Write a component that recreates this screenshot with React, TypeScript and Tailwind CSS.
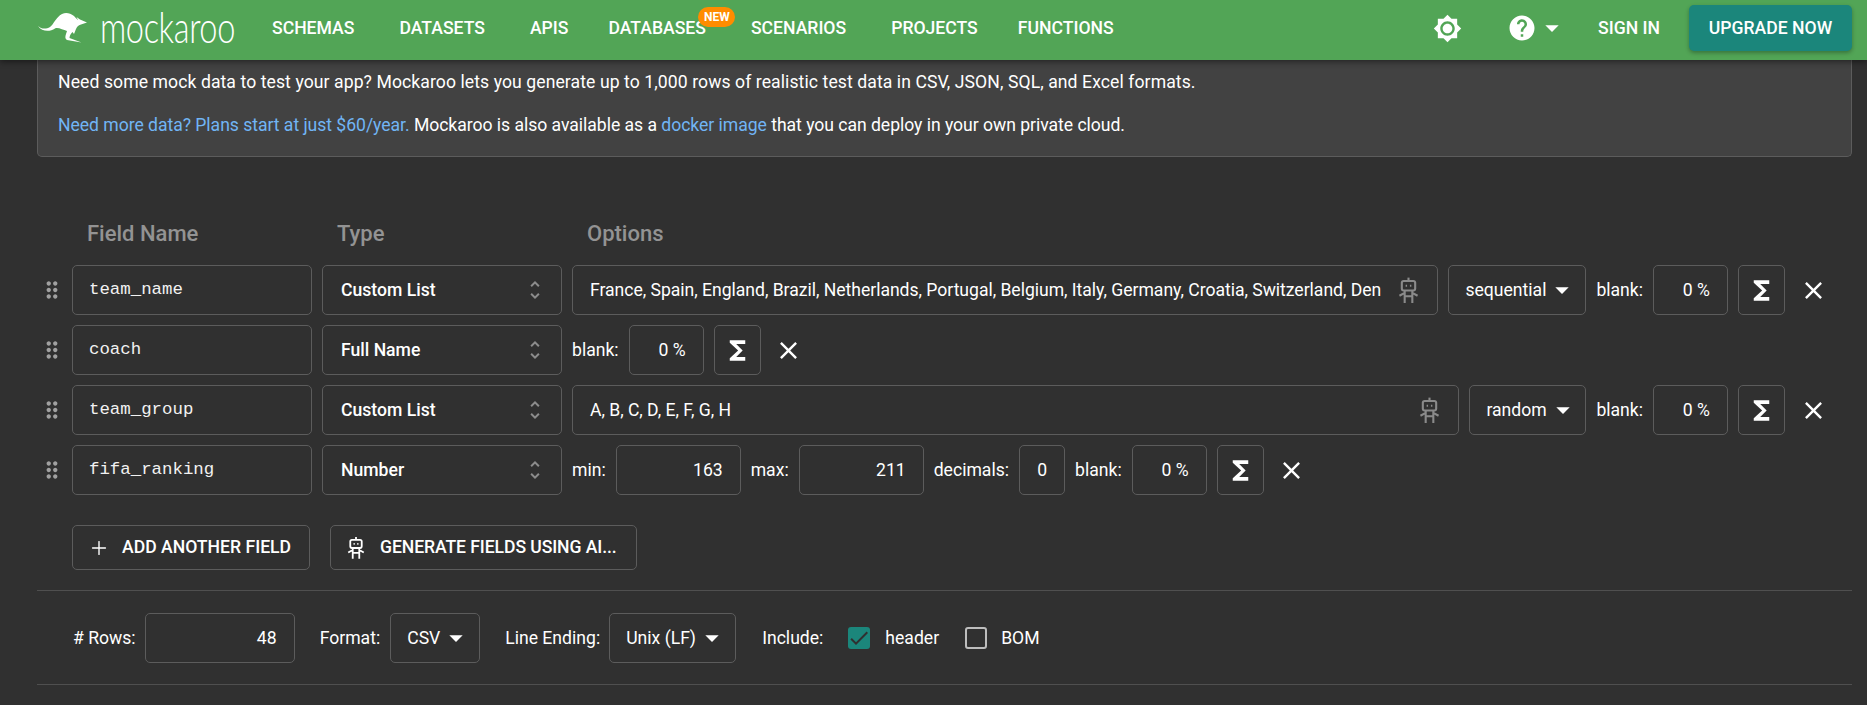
import React from "react";
import { MdArrowDropDown, MdBrightness7, MdCheck, MdClose, MdDragIndicator, MdFunctions, MdHelp, MdUnfoldMore } from "react-icons/md";
import { Plus } from "lucide-react";

const box = "h-[50px] border border-[#5c5c5c] rounded-[5px] flex items-center shrink-0";

function Robot({ className }: { className: string }) {
  return (
    <svg viewBox="0 0 22 28" fill="none" stroke="currentColor" strokeWidth="2.2" className={className}>
      <path d="M11 0.5V4" />
      <rect x="4" y="4" width="14" height="10" rx="2" />
      <path d="M8 9h1.5M12.5 9h1.5" />
      <path d="M7 14V27M15 14V27M7 20H15M7 16.5L1.5 19.5M15 16.5L20.5 19.5" />
    </svg>
  );
}

function Kangaroo() {
  return (
    <svg viewBox="0 0 70 44" className="w-[70px] h-[44px] shrink-0 -ml-[7px]" fill="white">
      <path d="M7 20C10 23 15 23.5 19 21C23 18 25 11 31 8C35 6 39 7 43 10C45 12 46 13.5 47 14L45.5 11L49 13.5L56 16.5L50 18.5C47 19 46 21 45 23L43 28L41.5 26C39.5 28 38.5 30 38.5 32L50.5 36.5L36 34C34 33 34 31 35 28L36 25C32 24 27 21 24 22.5C19 26 11 26 7 20Z" />
    </svg>
  );
}

function NameInput({ value }: { value: string }) {
  return (
    <div className={`${box} w-[240px] pl-[16px] text-[17.4px] text-[#f2f2f2] font-['Liberation_Mono',monospace]`}>{value}</div>
  );
}

function TypeSelect({ value }: { value: string }) {
  return (
    <div className={`${box} w-[240px] pl-[18px] pr-[14px] justify-between font-medium`}>
      <span>{value}</span>
      <MdUnfoldMore className="text-[#8c8c8c] w-[24px] h-[24px]" />
    </div>
  );
}

function Caret({ className = "" }: { className?: string }) {
  return <MdArrowDropDown className={`w-[32px] h-[32px] text-white shrink-0 ${className}`} />;
}

function NumInput({ value, className }: { value: string; className: string }) {
  return <div className={`${box} justify-end ${className}`}>{value}</div>;
}

function Sigma() {
  return (
    <div className={`${box} w-[47px] justify-center`}>
      <MdFunctions className="w-[31px] h-[31px] text-white" />
    </div>
  );
}

function Remove() {
  return (
    <div className="w-[36px] flex justify-center shrink-0">
      <MdClose className="w-[29px] h-[29px] text-white" />
    </div>
  );
}

function Blank() {
  return (
    <>
      <span>blank:</span>
      <NumInput value="0 %" className="w-[75px] pr-[17px]" />
      <Sigma />
      <Remove />
    </>
  );
}

function Row({ children }: { children: React.ReactNode }) {
  return (
    <div className="flex items-center gap-[10px] h-[50px] mb-[10px] pr-[21px]">
      <div className="w-[25px] flex justify-end shrink-0">
        <MdDragIndicator className="w-[26px] h-[26px] -mr-[3px] text-[#a0a0a0]" />
      </div>
      {children}
    </div>
  );
}

function ListOptions({ text, mode, modeClass }: { text: string; mode: string; modeClass: string }) {
  return (
    <>
      <div className={`${box} flex-1 min-w-0 shrink pl-[17px] pr-[18px] gap-[16px]`}>
        <span className="flex-1 min-w-0 whitespace-nowrap tracking-[-0.03px]">{text}</span>
        <Robot className="w-[21px] h-[27px] text-[#8a8a8a] shrink-0" />
      </div>
      <div className={`${box} ${modeClass} pl-[16px] pr-[7px] justify-between`}>
        <span>{mode}</span>
        <Caret />
      </div>
      <Blank />
    </>
  );
}

const nav = [
  { label: "SCHEMAS", cls: "" },
  { label: "DATASETS", cls: "" },
  { label: "APIS", cls: "" },
  { label: "DATABASES", cls: "-ml-[5px]" },
  { label: "SCENARIOS", cls: "" },
  { label: "PROJECTS", cls: "" },
  { label: "FUNCTIONS", cls: "-ml-[5px]" },
];

export default function App() {
  return (
    <div className="h-[705px] overflow-hidden bg-[#303030] text-white text-[17.6px] font-['Roboto',sans-serif]">
      <header className="relative z-10 h-[60px] bg-[#52a556] shadow-[0_2px_6px_rgba(0,0,0,0.45)] flex items-center pl-[38px] pr-[15px] pb-[4px]">
        <Kangaroo />
        <span className="font-['Lato',sans-serif] font-light text-[44px] leading-none w-[135px] -ml-[1px] mt-[-4px] scale-x-[0.74] origin-left whitespace-nowrap tracking-[-0.5px]">mockaroo</span>
        <nav className="flex items-center gap-[45px] ml-[37px] font-medium">
          {nav.map((n) => (
            <span key={n.label} className={`relative ${n.cls}`}>
              {n.label}
              {n.label === "DATABASES" && (
                <span className="absolute left-[90px] -top-[8px] w-[37px] h-[20px] rounded-[10px] bg-[#ff8c00] text-[12px] font-bold leading-[20px] text-center">NEW</span>
              )}
            </span>
          ))}
        </nav>
        <div className="flex-1" />
        <MdBrightness7 className="w-[29px] h-[29px]" />
        <MdHelp className="w-[30px] h-[30px] ml-[45px]" />
        <Caret className="-ml-[1px]" />
        <span className="ml-[30px] -mr-[1px] font-medium">SIGN IN</span>
        <div className="ml-[30px] h-[46px] w-[163px] rounded-[5px] bg-[#1b867b] shadow-[0_2px_4px_rgba(0,0,0,0.3)] flex items-center justify-center font-medium">UPGRADE NOW</div>
      </header>

      <main className="pl-[37px] pr-[15px]">
        <section className="bg-[#424242] border border-t-0 border-[#5c5c5c] rounded-b-[5px] pt-[10px] px-[20px] h-[97px]">
          <p className="leading-[24px] mb-[19px] tracking-[0.08px]">Need some mock data to test your app? Mockaroo lets you generate up to 1,000 rows of realistic test data in CSV, JSON, SQL, and Excel formats.</p>
          <p className="leading-[24px] tracking-[-0.04px]">
            <span className="text-[#71b5f5]">Need more data? Plans start at just $60/year.</span> Mockaroo is also available as a <span className="text-[#71b5f5]">docker image</span> that you can deploy in your own private cloud.
          </p>
        </section>

        <div className="flex mt-[61px] mb-[17px] h-[30px] items-center text-[22px] font-medium text-[#939393]">
          <span className="ml-[50px] w-[250px]">Field Name</span>
          <span className="w-[250px]">Type</span>
          <span>Options</span>
        </div>

        <Row>
          <NameInput value="team_name" />
          <TypeSelect value="Custom List" />
          <ListOptions text="France, Spain, England, Brazil, Netherlands, Portugal, Belgium, Italy, Germany, Croatia, Switzerland, Den" mode="sequential" modeClass="w-[138px]" />
        </Row>
        <Row>
          <NameInput value="coach" />
          <TypeSelect value="Full Name" />
          <Blank />
        </Row>
        <Row>
          <NameInput value="team_group" />
          <TypeSelect value="Custom List" />
          <ListOptions text="A, B, C, D, E, F, G, H" mode="random" modeClass="w-[117px]" />
        </Row>
        <Row>
          <NameInput value="fifa_ranking" />
          <TypeSelect value="Number" />
          <span>min:</span>
          <NumInput value="163" className="w-[125px] pr-[17px]" />
          <span>max:</span>
          <NumInput value="211" className="w-[125px] pr-[17px]" />
          <span>decimals:</span>
          <NumInput value="0" className="w-[46px] pr-[17px]" />
          <span>blank:</span>
          <NumInput value="0 %" className="w-[75px] pr-[17px]" />
          <Sigma />
          <Remove />
        </Row>

        <div className="flex gap-[20px] ml-[35px] mt-[30px] mb-[20px]">
          <div className="h-[45px] w-[238px] border border-[#5c5c5c] rounded-[5px] flex items-center pl-[15px] gap-[12px] font-medium">
            <Plus className="w-[22px] h-[22px]" strokeWidth={1.5} />
            ADD ANOTHER FIELD
          </div>
          <div className="h-[45px] w-[307px] border border-[#5c5c5c] rounded-[5px] flex items-center pl-[16px] gap-[15px] font-medium tracking-[-0.09px]">
            <Robot className="w-[18px] h-[24px] text-white" />
            GENERATE FIELDS USING AI...
          </div>
        </div>

        <div className="border-t border-[#4f4f4f] pt-[22px] pb-[21px] flex items-center pl-[36px]">
          <span># Rows:</span>
          <NumInput value="48" className="w-[150px] ml-[9px] pr-[17px]" />
          <span className="ml-[25px]">Format:</span>
          <div className={`${box} w-[90px] ml-[10px] pl-[16px] pr-[7px] justify-between`}>
            <span>CSV</span>
            <Caret />
          </div>
          <span className="ml-[25px]">Line Ending:</span>
          <div className={`${box} w-[127px] ml-[9px] pl-[16px] pr-[7px] justify-between`}>
            <span>Unix (LF)</span>
            <Caret />
          </div>
          <span className="ml-[26px]">Include:</span>
          <div className="ml-[25px] w-[22px] h-[22px] rounded-[3px] bg-[#1b867b] flex items-center justify-center">
            <MdCheck className="w-[24px] h-[24px] shrink-0 text-[#303030]" />
          </div>
          <span className="ml-[15px]">header</span>
          <div className="ml-[26px] w-[22px] h-[22px] rounded-[3px] border-2 border-[#bdbdbd]" />
          <span className="ml-[14px]">BOM</span>
        </div>
        <div className="border-t border-[#4f4f4f]" />
      </main>
    </div>
  );
}
